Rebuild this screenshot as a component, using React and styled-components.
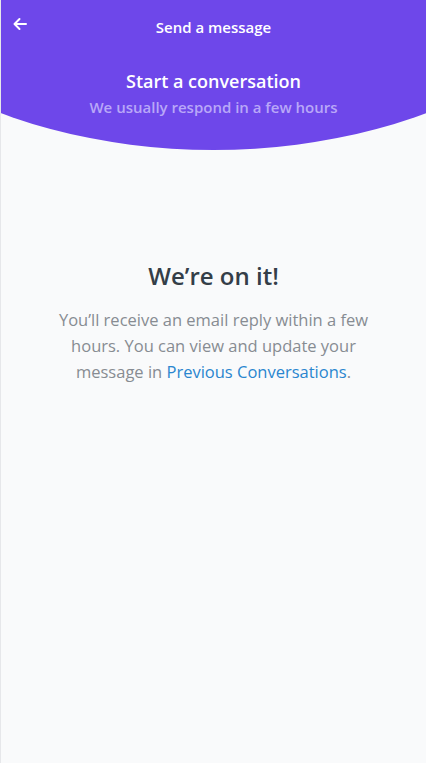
import React from 'react';
import styled, { createGlobalStyle } from 'styled-components';

const Global = createGlobalStyle`
  html, body {
    margin: 0;
    padding: 0;
    background: #f9fafb;
  }
  body {
    font-family: 'Open Sans', 'Noto Sans', sans-serif;
  }
`;

const Page = styled.div`
  min-height: 763px;
  background: #f9fafb;
  border-left: 1px solid #e6e7ea;
  box-sizing: border-box;
  display: flex;
  flex-direction: column;
`;

const Header = styled.header`
  height: 150px;
  background: #6e47ea;
  color: #fff;
  clip-path: ellipse(426px 276px at 50% -126px);
  display: flex;
  flex-direction: column;
  align-items: center;
`;

const TopBar = styled.div`
  width: 100%;
  height: 52px;
  display: grid;
  grid-template-columns: 40px 1fr 40px;
  align-items: center;
`;

const BackButton = styled.button`
  border: 0;
  background: none;
  padding: 0 0 0 11px;
  color: #fff;
  display: flex;
  align-items: center;
  height: 100%;
  margin-top: -5px;
  cursor: pointer;
`;

const BarTitle = styled.div`
  text-align: center;
  font-size: 15px;
  font-weight: 600;
  margin-top: 1px;
`;

const Heading = styled.h1`
  margin: 17px 0 0;
  font-size: 18px;
  font-weight: 600;
  line-height: 24px;
`;

const Subheading = styled.p`
  margin: 4px 0 0;
  font-size: 15px;
  font-weight: 600;
  line-height: 20px;
  color: #b9a7f8;
`;

const Body = styled.main`
  display: flex;
  flex-direction: column;
  align-items: center;
  padding: 110px 50px 0;
  text-align: center;
`;

const Title = styled.h2`
  margin: 0;
  font-size: 24px;
  font-weight: 600;
  line-height: 32px;
  color: #343e48;
`;

const Message = styled.p`
  margin: 15px 0 0;
  font-size: 16.5px;
  line-height: 26px;
  color: #878c92;
`;

const LinkText = styled.a`
  color: #2a86cf;
  text-decoration: none;
`;

export default function App() {
  return (
    <Page>
      <Global />
      <Header>
        <TopBar>
          <BackButton aria-label="Back">
            <svg width="16" height="16" viewBox="0 0 16 16" fill="none" stroke="currentColor" strokeWidth="2" strokeLinecap="round" strokeLinejoin="round">
              <path d="M14 8H2.5M7.5 3L2.5 8l5 5" />
            </svg>
          </BackButton>
          <BarTitle>Send a message</BarTitle>
          <div />
        </TopBar>
        <Heading>Start a conversation</Heading>
        <Subheading>We usually respond in a few hours</Subheading>
      </Header>
      <Body>
        <Title>We’re on it!</Title>
        <Message>
          You’ll receive an email reply within a few hours. You can view and update your message in{' '}
          <LinkText href="#">Previous Conversations</LinkText>.
        </Message>
      </Body>
    </Page>
  );
}
